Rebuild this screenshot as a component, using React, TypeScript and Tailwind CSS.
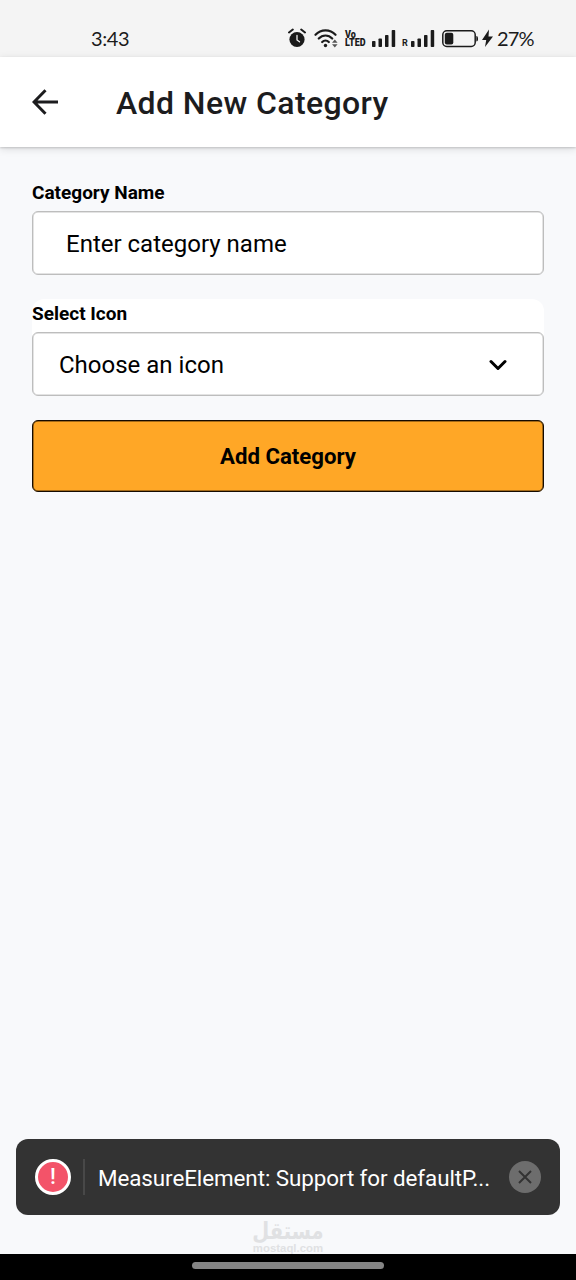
import { useState } from 'react'
import type { ReactNode } from 'react'

export default function App() {
  const [name, setName] = useState('')
  const [showToast, setShowToast] = useState(true)

  return (
    <div className="flex h-[1280px] w-[576px] flex-col overflow-hidden bg-[#f8f9fb] font-['Roboto',sans-serif] text-black">
      <StatusBar />

      <header className="z-10 flex h-[90px] shrink-0 items-center bg-white pl-[32px] shadow-[0_1px_2px_rgba(0,0,0,0.16),0_2px_8px_rgba(0,0,0,0.12)]">
        <button type="button" aria-label="Back">
          <svg width="26" height="26" viewBox="0 0 26 26" fill="none" stroke="#1c1c1e" strokeWidth="3">
            <path d="M26 13H2.5M13.5 1.200L2 13l11.500 11.800" />
          </svg>
        </button>
        <h1 className="ml-[58px] mt-[2px] text-[32px] font-medium leading-[40px] tracking-[0.400px] text-[#1c1c1e]">Add New Category</h1>
      </header>

      <main className="flex flex-1 flex-col px-8 pt-[32px]">
        <Field label="Category Name">
          <input
            value={name}
            onChange={(event) => setName(event.target.value)}
            placeholder="Enter category name"
            className="h-[64px] w-full rounded-[6px] border-[1.500px] border-[#bdbdbd] bg-white px-[33px] pt-[2px] text-[24px] text-black shadow-[inset_0_0_0_0.500px_#c8c8c8] outline-none placeholder:text-black"
          />
        </Field>

        <div className="mt-[24px] rounded-[12px] bg-white pt-px">
          <Field label="Select Icon">
            <button
              type="button"
              className="flex h-[64px] w-full items-center justify-between rounded-[6px] border-[1.500px] border-[#bdbdbd] bg-white pl-[26px] pr-[36px] pt-px text-[24px] shadow-[inset_0_0_0_0.500px_#c8c8c8]"
            >
              Choose an icon
              <svg width="18" height="12" viewBox="0 0 18 12" fill="none" stroke="#000" strokeWidth="3" strokeLinecap="round" strokeLinejoin="round">
                <path d="M2 2.500l7 7 7-7" />
              </svg>
            </button>
          </Field>
        </div>

        <button type="button" className="mt-[24px] h-[72px] rounded-[6px] border-[1.500px] border-[#150b00] bg-[#ffa726] pt-[2px] text-[22.200px] font-bold shadow-[inset_0_0_0_0.500px_#4a2e08]">
          Add Category
        </button>
      </main>

      {showToast && <Toast message="MeasureElement: Support for defaultP..." onClose={() => setShowToast(false)} />}

      <Watermark />

      <div className="flex h-[26px] shrink-0 justify-center bg-black pt-[8px]">
        <div className="h-[7px] w-[192px] rounded-full bg-[#858585]" />
      </div>
    </div>
  )
}

function Field({ label, children }: { label: string; children: ReactNode }) {
  return (
    <label className="block">
      <span className="block h-[32px] pt-[2px] text-[19px] font-bold leading-[24px]">{label}</span>
      {children}
    </label>
  )
}

function Toast({ message, onClose }: { message: string; onClose: () => void }) {
  return (
    <div className="mx-4 flex h-[76px] shrink-0 items-center rounded-[12px] bg-[#333] px-[19px] text-white">
      <div className="flex size-[36px] shrink-0 items-center justify-center rounded-full border-[3px] border-white bg-[#f35369] text-[22px] font-medium leading-none">
        !
      </div>
      <div className="ml-[12px] h-[36px] w-[2px] shrink-0 bg-[#484848]" />
      <p className="ml-[13px] mt-[2px] whitespace-nowrap text-[22.400px] leading-[30px] tracking-[-0.080px]">{message}</p>
      <button type="button" aria-label="Dismiss" onClick={onClose} className="ml-auto flex size-[32px] shrink-0 items-center justify-center rounded-full bg-[#6d6d6d]">
        <svg width="14" height="14" viewBox="0 0 14 14" stroke="#333" strokeWidth="2">
          <path d="M1 1l12 12M13 1L1 13" />
        </svg>
      </button>
    </div>
  )
}

function Watermark() {
  return (
    <div className="flex h-[39px] shrink-0 flex-col items-center pt-[5px] font-bold text-[#e0e1e3]">
      <span dir="rtl" className="h-[23px] scale-y-[1.2] font-['DejaVu_Sans',sans-serif] text-[19.500px] leading-[23px]">مستقل</span>
      <span className="font-['Liberation_Sans',sans-serif] text-[11.400px] leading-[11px]">mostaql.com</span>
    </div>
  )
}

function StatusBar() {
  return (
    <div className="flex h-[57px] shrink-0 items-start bg-[#f4f4f4] pt-[28px] text-[#1b1b1b]">
      <span className="ml-[91px] w-[197px] font-['Lato',sans-serif] text-[20px] leading-[20px] tracking-[-0.400px]">3:43</span>
      <AlarmIcon />
      <WifiIcon />
      <span className="ml-[7px] flex w-[20px] flex-col pt-[2px] text-[9px] font-black leading-[8px]">
        <span className="origin-left scale-y-[1.2]">Vo</span>
        <span className="origin-left scale-y-[1.2]">LTED</span>
      </span>
      <SignalIcon className="ml-[7px]" />
      <span className="ml-[6px] w-[6px] pt-[11px] text-[9px] font-bold leading-[9px]">R</span>
      <SignalIcon className="ml-[3px]" />
      <BatteryIcon />
      <svg width="11" height="20" viewBox="0 0 11 20" className="ml-[4px]" fill="#1b1b1b">
        <path d="M7 1.500L0 12h4.200L3 19l8-10.500H6.500z" />
      </svg>
      <span className="ml-[4px] font-['Lato',sans-serif] text-[20px] leading-[20px] tracking-[-0.800px]">27%</span>
    </div>
  )
}

function AlarmIcon() {
  return (
    <svg width="18" height="20" viewBox="0 0 18 20" fill="none">
      <circle cx="9" cy="11.500" r="7.600" fill="#1b1b1b" />
      <path d="M1 4.500L4.800 1.500M17 4.500L13.200 1.500" stroke="#1b1b1b" strokeWidth="2" strokeLinecap="round" />
      <path d="M9 7.500v4.500l2.500 1.800" stroke="#f4f4f4" strokeWidth="1.300" strokeLinecap="round" />
    </svg>
  )
}

function WifiIcon() {
  return (
    <svg width="24" height="20" viewBox="0 0 24 20" className="ml-[8px]" fill="none" stroke="#1b1b1b" strokeWidth="2.200" strokeLinecap="round">
      <path d="M1.500 6.800C7 .8 16 .8 21.500 6.800M4.800 10.500c3.700-4 9.700-4 13.400 0M8.200 14c1.900-1.900 4.700-1.900 6.600 0" />
      <circle cx="11.500" cy="17.500" r="1.700" fill="#1b1b1b" stroke="none" />
      <path d="M18 14.800l2.800-3.300 2.800 3.300zM18 16.200l2.800 3.300 2.800-3.300z" fill="#555" stroke="none" />
    </svg>
  )
}

function SignalIcon({ className }: { className: string }) {
  return (
    <svg width="24" height="20" viewBox="0 0 24 20" className={className} fill="#1b1b1b">
      <rect x="0" y="13" width="3.500" height="6" rx="0.800" />
      <rect x="6.500" y="10.500" width="3.500" height="8.500" rx="0.800" />
      <rect x="13" y="7" width="3.500" height="12" rx="0.800" />
      <rect x="19.700" y="2" width="3.500" height="17" rx="0.800" />
    </svg>
  )
}

function BatteryIcon() {
  return (
    <svg width="36" height="20" viewBox="0 0 36 20" className="ml-[7px]">
      <rect x="0.800" y="2.800" width="32.400" height="15.600" rx="4" fill="none" stroke="#1b1b1b" strokeWidth="1.500" />
      <rect x="2.800" y="4.800" width="8.500" height="11.600" rx="2" fill="#1b1b1b" />
      <path d="M34.300 8q1.700 0 1.700 2v1.500q0 2-1.700 2z" fill="#1b1b1b" />
    </svg>
  )
}
